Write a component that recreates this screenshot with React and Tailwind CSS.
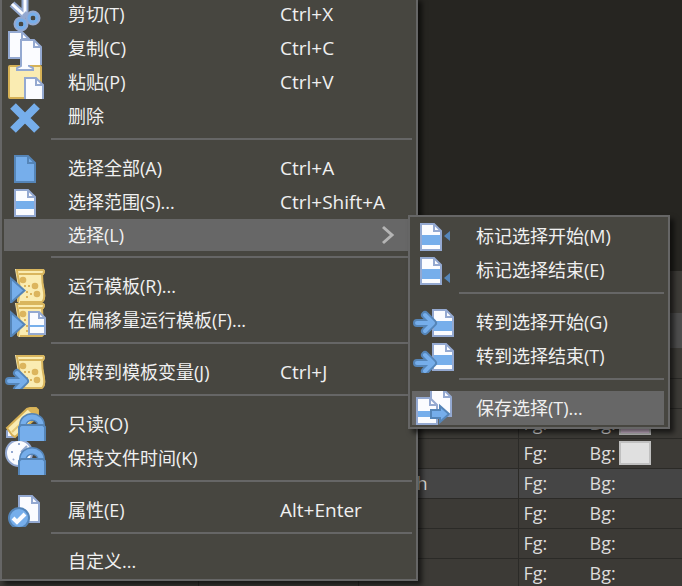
import React from "react";

const OUTLINE = "#94a9d1";
const WHITE = "#fbfcff";
const BLUE = "#76aeeb";
const DEEP = "#5585b8";

function Doc({ x, y, w = 22, h = 28, fold = 7, fill = WHITE, stroke = OUTLINE, band, bandHeight = 10 }) {
  const l = x + 1;
  const t = y + 1;
  const r = x + w - 1;
  const b = y + h - 1;
  return (
    <g strokeWidth="2" stroke={stroke}>
      <path d={`M${l} ${t}H${r - fold}L${r} ${t + fold}V${b}H${l}Z`} fill={fill} />
      {band && <rect x={x + 2} y={band} width={w - 4} height={bandHeight} fill={BLUE} stroke="none" />}
      <path d={`M${r - fold} ${t}V${t + fold}H${r}`} fill="none" />
    </g>
  );
}

function Arrow({ y }) {
  const d = `M9 ${y}H24M17 ${y - 8}L25 ${y}L17 ${y + 8}`;
  return (
    <g fill="none" strokeLinecap="round" strokeLinejoin="round">
      <path d={d} stroke={DEEP} strokeWidth="8" />
      <path d={d} stroke={BLUE} strokeWidth="4" />
    </g>
  );
}

function Scroll() {
  return (
    <g>
      <path d="M15 0H43Q46 1 44 5L42 7Q43 15 45 24Q46 31 42 33L20 34Q17 34 17 31L19 23L16 6Z" fill="#faecb2" />
      <path d="M16 1H43Q45 2 43 5H19M42 5Q42 14 44 23Q45 31 42 33H20M17 2Q19 12 20 20L18 33" fill="none" stroke="#d9b65e" strokeWidth="2" />
      <g fill="#dcb55d">
        <circle cx="23" cy="11" r="3.3" />
        <circle cx="35" cy="17" r="3.3" />
        <circle cx="37" cy="25" r="3.3" />
        <path d="M24 16h2v2h-2zM28 16h2v2h-2zM26 22h2v2h-2zM30 24h2v2h-2zM26 27h2v2h-2z" />
      </g>
    </g>
  );
}

function Play() {
  return (
    <path d="M11 9.500L24.500 21.500L11 33.500Z" fill={BLUE} stroke={DEEP} strokeWidth="2" />
  );
}

function Lock() {
  return (
    <g>
      <path d="M23 20V18A9 8 0 0 1 41 18V20" fill="none" stroke={DEEP} strokeWidth="8" />
      <path d="M23 20V18A9 8 0 0 1 41 18V20" fill="none" stroke={BLUE} strokeWidth="5" />
      <path d="M19 36V20L21 18H43L45 20V36Z" fill={BLUE} stroke={DEEP} strokeWidth="2" />
    </g>
  );
}

const icons = {
  cut: (
    <>
      <path d="M25 0V17M12 7L25 19" stroke={OUTLINE} strokeWidth="7" />
      <path d="M25 0V17M12 7L24 18" stroke={WHITE} strokeWidth="3" />
      <path d="M22 18L26 14L29 19L24 22Z" fill={OUTLINE} />
      <g fill="none">
        <circle cx="33" cy="21" r="5" stroke={OUTLINE} strokeWidth="5" />
        <circle cx="33" cy="21" r="4" stroke={BLUE} strokeWidth="3" />
        <circle cx="21" cy="27" r="5" stroke={OUTLINE} strokeWidth="5" />
        <circle cx="21" cy="27" r="4" stroke={BLUE} strokeWidth="3" />
      </g>
    </>
  ),
  copy: (
    <>
      <Doc x={8} y={0} />
      <Doc x={20} y={8} h={30} />
    </>
  ),
  paste: (
    <>
      <rect x="9" y="1" width="32" height="32" rx="1" fill="#faecb2" stroke="#d6b156" strokeWidth="2" />
      <path d="M21 -1H29V1L33 3V5H17V3L21 1Z" fill={WHITE} stroke={OUTLINE} strokeWidth="2" />
      <Doc x={24} y={12} w={20} h={24} />
    </>
  ),
  remove: <path d="M13 7L37 31M37 7L13 31" stroke={BLUE} strokeWidth="8" />,
  all: <Doc x={14} y={4} fill={BLUE} stroke={DEEP} />,
  range: <Doc x={14} y={4} band={16} bandHeight={8} />,
  run: (
    <>
      <Scroll />
      <Play />
    </>
  ),
  offset: (
    <>
      <Scroll />
      <Play />
      <Doc x={28} y={8} w={18} h={24} fold={6} band={22} bandHeight={2} />
    </>
  ),
  jump: (
    <>
      <Scroll />
      <Arrow y={26} />
    </>
  ),
  readonly: (
    <>
      <path d="M7 24V30H14L10 22Z" fill={WHITE} stroke={OUTLINE} strokeWidth="2" />
      <path d="M7 21L27 2L30 1H36L38 3V9L15 30L12 28Z" fill="#faecb2" stroke="#d6b156" strokeWidth="2" />
      <path d="M27 2L30 1H36L38 3V9L35 10Z" fill="#dbb65c" />
      <path d="M12 25L31 7" stroke="#e4c878" strokeWidth="2" />
      <Lock />
    </>
  ),
  time: (
    <>
      <circle cx="19" cy="12" r="13" fill={WHITE} stroke={OUTLINE} strokeWidth="2" />
      <path d="M21 11L27 5M19 2V4M11 11H13M13 19L14 18" fill="none" stroke={OUTLINE} strokeWidth="2" />
      <Lock />
    </>
  ),
  properties: (
    <>
      <Doc x={18} y={2} />
      <circle cx="19" cy="25" r="10" fill={BLUE} stroke={DEEP} strokeWidth="2" />
      <path d="M13 25L17 29L25 21" fill="none" stroke={WHITE} strokeWidth="4" />
    </>
  ),
  markStart: (
    <>
      <Doc x={12} y={4} band={16} />
      <path d="M36 17L42 12V22Z" fill={DEEP} />
    </>
  ),
  markEnd: (
    <>
      <Doc x={12} y={4} band={16} />
      <path d="M36 25L42 20V30Z" fill={DEEP} />
    </>
  ),
  gotoStart: (
    <>
      <Doc x={24} y={4} band={16} />
      <Arrow y={18} />
    </>
  ),
  gotoEnd: (
    <>
      <Doc x={24} y={4} band={16} />
      <Arrow y={24} />
    </>
  ),
  save: (
    <>
      <Doc x={22} y={-2} />
      <Doc x={8} y={6} band={20} bandHeight={6} />
      <path d="M23 19H32V15L41 23L32 31V27H23Z" fill={BLUE} stroke={DEEP} strokeWidth="2" />
    </>
  ),
};

const mainItems = [
  { label: "剪切(T)", keys: "Ctrl+X", icon: "cut" },
  { label: "复制(C)", keys: "Ctrl+C", icon: "copy" },
  { label: "粘贴(P)", keys: "Ctrl+V", icon: "paste" },
  { label: "删除", icon: "remove" },
  null,
  { label: "选择全部(A)", keys: "Ctrl+A", icon: "all" },
  { label: "选择范围(S)...", keys: "Ctrl+Shift+A", icon: "range" },
  { label: "选择(L)", active: true, submenu: true },
  null,
  { label: "运行模板(R)...", icon: "run" },
  { label: "在偏移量运行模板(F)...", icon: "offset" },
  null,
  { label: "跳转到模板变量(J)", keys: "Ctrl+J", icon: "jump" },
  null,
  { label: "只读(O)", icon: "readonly" },
  { label: "保持文件时间(K)", icon: "time" },
  null,
  { label: "属性(E)", keys: "Alt+Enter", icon: "properties" },
  null,
  { label: "自定义..." },
];

const subItems = [
  { label: "标记选择开始(M)", icon: "markStart" },
  { label: "标记选择结束(E)", icon: "markEnd" },
  null,
  { label: "转到选择开始(G)", icon: "gotoStart" },
  { label: "转到选择结束(T)", icon: "gotoEnd" },
  null,
  { label: "保存选择(T)...", icon: "save", active: true },
];

function MenuItem({ item }) {
  return (
    <button
      type="button"
      role="menuitem"
      className={`flex w-full items-center text-left whitespace-nowrap ${item.icon ? "h-[34px]" : "h-8"} ${item.active ? "bg-[#676767]" : ""}`}
    >
      <span className="w-16 shrink-0">
        {item.icon && (
          <svg width="44" height="34" viewBox="4 0 44 34" aria-hidden="true">
            {icons[item.icon]}
          </svg>
        )}
      </span>
      <span className={item.keys ? "w-[212px]" : "flex-1"}>{item.label}</span>
      {item.keys && <span className="text-[19px]">{item.keys}</span>}
      {item.submenu && (
        <svg className="mr-4" width="16" height="20" viewBox="0 0 16 20" fill="none" stroke="#b4b4b4" strokeWidth="3" aria-hidden="true">
          <path d="M3 2L12 10L3 18" />
        </svg>
      )}
    </button>
  );
}

function Menu({ items, label, className }) {
  return (
    <div
      role="menu"
      aria-label={label}
      className={`absolute border-2 border-[#666666] bg-[#474640] pr-1 pb-0.5 pl-0.5 shadow-[4px_4px_5px_rgba(0,0,0,0.6)] ${className}`}
    >
      {items.map((item, i) =>
        item ? (
          <MenuItem key={i} item={item} />
        ) : (
          <div key={i} role="separator" className="ml-[47px] h-[18px] pt-[5px]">
            <div className="h-0.5 bg-[#666666]" />
          </div>
        )
      )}
    </div>
  );
}

const rows = [
  { empty: true },
  { empty: true },
  { swatch: "bg-[#e0c8e0]" },
  { swatch: "bg-[#e0e0e0]" },
  { name: "h", active: true },
  {},
  {},
  {},
];

export default function App() {
  return (
    <div className="relative h-screen overflow-hidden bg-[#262521] font-['Open_Sans','Noto_Sans_CJK_SC',sans-serif] text-[18px] leading-6 text-[#f0f0f0]">
      <div className="h-[271px]" />
      <div className="h-[42px] bg-[#3d3b37]" />
      <div className="h-[35px] bg-[#4d4d4d]" />
      <table className="w-full table-fixed border-collapse bg-[#3c3a36] text-[#dcdcdc]">
        <colgroup>
          <col className="w-[198px]" />
          <col className="w-40" />
          <col className="w-40" />
          <col />
        </colgroup>
        <tbody>
          {rows.map((row, i) => (
            <tr key={i} className={`h-[30px] border-b border-[#2b2a27] ${row.active ? "bg-[#454545]" : ""}`}>
              <td className="border-r border-[#2b2a27] p-0" />
              <td className="border-r border-[#2b2a27] p-0" />
              <td className="border-r border-[#2b2a27] p-0 pr-[90px] text-right">{row.name}</td>
              <td className="p-0">
                {!row.empty && (
                  <div className="flex h-[29px] items-center pl-[5px]">
                    <span className="w-[66px]">Fg:</span>
                    <span className="w-[29px]">Bg:</span>
                    {row.swatch && <span className={`h-6 w-8 border-2 border-[#c0c0c0] ${row.swatch}`} />}
                  </div>
                )}
              </td>
            </tr>
          ))}
        </tbody>
      </table>

      <Menu items={mainItems} label="编辑" className="-top-[3px] left-0 w-[418px] border-t-0" />
      <Menu items={subItems} label="选择" className="top-[215px] left-[408px] w-[262px] pt-0.5" />
    </div>
  );
}
